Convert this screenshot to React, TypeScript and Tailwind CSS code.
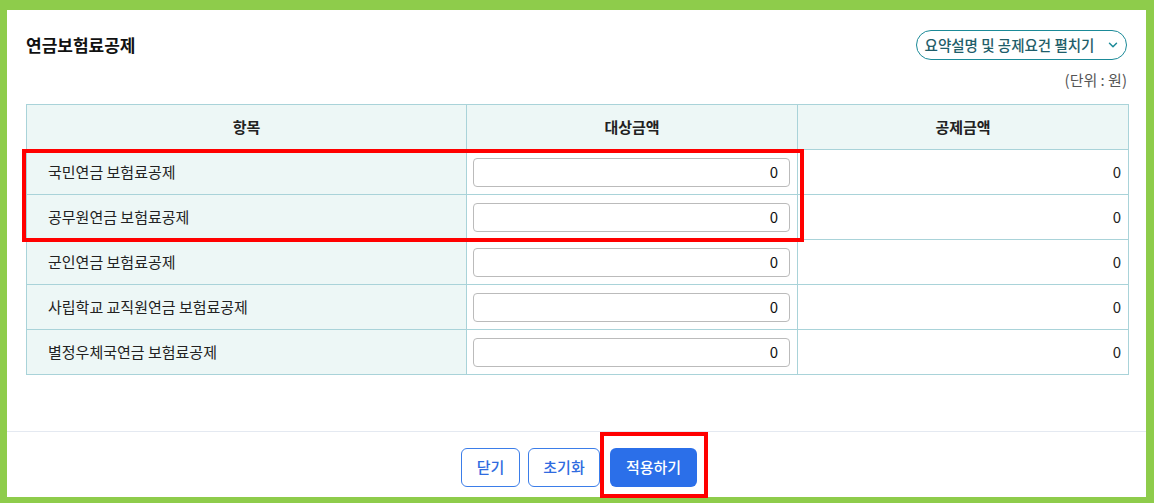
import { ChevronDown } from 'lucide-react'

const rows = [
  '국민연금 보험료공제',
  '공무원연금 보험료공제',
  '군인연금 보험료공제',
  '사립학교 교직원연금 보험료공제',
  '별정우체국연금 보험료공제',
]

export default function App() {
  return (
    <div
      className="relative w-[1154px] h-[503px] bg-[#8ecc4b] pt-[10px] pl-[7px] pr-[8px] pb-[6px] text-[#222]"
      style={{ fontFamily: '"Noto Sans CJK KR", "Noto Sans", sans-serif' }}
    >
      <div className="flex flex-col h-full bg-white">
        {/* Body */}
        <div className="h-[421px] px-[19px] pt-[20px]">
          <div className="flex items-center justify-between h-[30px]">
            <h2 className="text-[17px] font-semibold text-[#111]">연금보험료공제</h2>
            <button className="flex items-center gap-[12px] h-[30px] w-[211px] justify-center pl-[2px] rounded-full border-[1.5px] border-[#1b8a98] text-[14.5px] font-medium text-[#1f5e6a]">
              <span>요약설명 및 공제요건 펼치기</span>
              <ChevronDown className="w-[14px] h-[14px] text-[#1b8a98]" strokeWidth={2.5} />
            </button>
          </div>
          <div className="mt-[10px] h-[20px] text-right text-[15px] leading-[20px] text-[#555]">(단위 : 원)</div>
          <table className="mt-[14px] w-[1102px] border-collapse text-[15px] table-fixed">
            <colgroup>
              <col className="w-[440px]" />
              <col className="w-[331px]" />
              <col className="w-[331px]" />
            </colgroup>
            <thead>
              <tr className="h-[45px] bg-[#edf7f6]">
                <th className="border border-[#a9d3d9] font-semibold text-[#222]">항목</th>
                <th className="border border-[#a9d3d9] font-semibold text-[#222]">대상금액</th>
                <th className="border border-[#a9d3d9] font-semibold text-[#222]">공제금액</th>
              </tr>
            </thead>
            <tbody>
              {rows.map((name) => (
                <tr key={name} className="h-[45px]">
                  <td className="border border-[#a9d3d9] bg-[#edf7f6] pl-[21px] text-[#222]">{name}</td>
                  <td className="border border-[#a9d3d9] px-[6px]">
                    <div className="flex items-center justify-end h-[29px] w-[317px] rounded-[4px] border border-[#bbbbbb] pr-[11px] text-[15px] text-[#111]">
                      0
                    </div>
                  </td>
                  <td className="border border-[#a9d3d9] pr-[7px] text-right text-[15px] text-[#222]">0</td>
                </tr>
              ))}
            </tbody>
          </table>
        </div>
        {/* Footer */}
        <div className="flex-1 border-t border-[#e4e9f1] pt-[16px] flex justify-center gap-2 pl-[5px]">
          <button className="h-[39px] w-[59px] rounded-[6px] border border-[#3b7de9] text-[15px] font-medium text-[#2f6be0]">닫기</button>
          <button className="h-[39px] w-[72px] rounded-[6px] border border-[#3b7de9] text-[15px] font-medium text-[#2f6be0]">초기화</button>
          <button className="ml-[2px] h-[39px] w-[87px] rounded-[6px] bg-[#2b6fe9] text-[15px] font-medium text-white">적용하기</button>
        </div>
      </div>

      {/* Annotation overlays */}
      <div className="absolute left-[22px] top-[149px] w-[782px] h-[93px] border-[4px] border-[#ff0000] pointer-events-none" />
      <div className="absolute left-[600px] top-[432px] w-[108px] h-[66px] border-[4px] border-[#ff0000] pointer-events-none" />
    </div>
  )
}
